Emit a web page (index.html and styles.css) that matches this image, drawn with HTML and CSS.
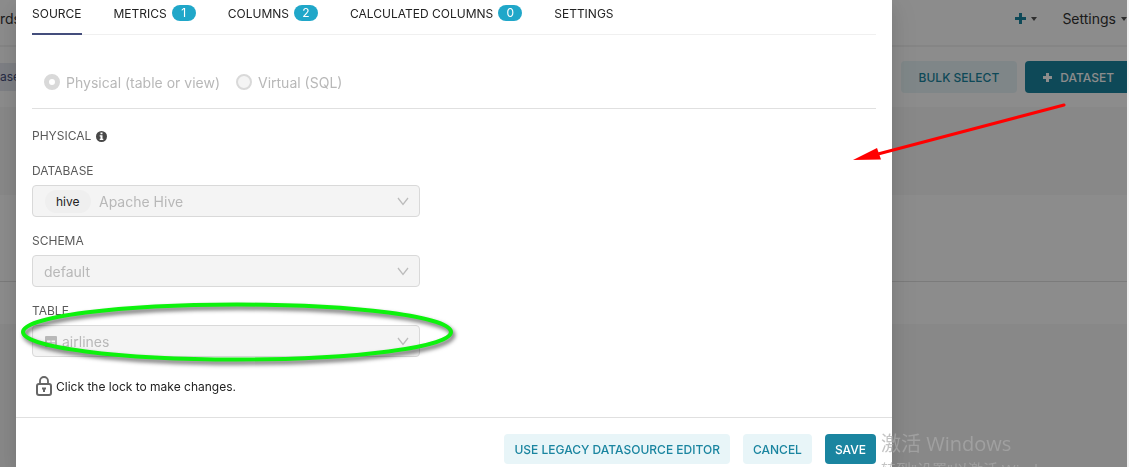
FILE: index.html
```html
<!DOCTYPE html>
<html lang="en">
<head>
<meta charset="utf-8">
<title>Edit Dataset</title>
<link rel="stylesheet" href="styles.css">
</head>
<body>
<div class="page">
  <header class="navbar">
    <a class="nav-link" href="#">rds</a>
    <div class="nav-right">
      <button class="nav-button" type="button" aria-label="New">
        <svg width="11" height="11" viewBox="0 0 11 11"><path d="M4 0h3v4h4v3H7v4H4V7H0V4h4z" fill="#1a85a0"/></svg>
        <span class="caret"></span>
      </button>
      <button class="nav-button settings" type="button">Settings <span class="caret"></span></button>
    </div>
  </header>
  <div class="subbar">
    <a class="subtab" href="#">ase</a>
    <div class="actions">
      <button class="btn btn-large secondary" type="button">BULK SELECT</button>
      <button class="btn btn-large primary add" type="button">
        <svg width="9" height="9" viewBox="0 0 9 9"><path d="M3 0h3v3h3v3H6v3H3V6H0V3h3z" fill="#fff"/></svg>
        DATASET
      </button>
    </div>
  </div>
  <div class="filters"></div>
  <div class="list-head"></div>
  <div class="list-row"></div>
</div>

<div class="overlay">
  <main class="modal">
    <div class="modal-body">
      <nav class="tabs">
        <button class="tab active" type="button">SOURCE</button>
        <button class="tab" type="button">METRICS <span class="badge">1</span></button>
        <button class="tab" type="button">COLUMNS <span class="badge">2</span></button>
        <button class="tab" type="button">CALCULATED COLUMNS <span class="badge">0</span></button>
        <button class="tab" type="button">SETTINGS</button>
      </nav>
      <div class="kinds">
        <label class="kind"><input class="radio" type="radio" name="kind" checked disabled>Physical (table or view)</label>
        <label class="kind"><input class="radio" type="radio" name="kind" disabled>Virtual (SQL)</label>
      </div>
      <h2 class="section">PHYSICAL
        <svg width="11" height="11" viewBox="0 0 11 11"><circle cx="5.500" cy="5.500" r="5.500" fill="#484848"/><path d="M4.500 1.500h2v1.800h-2zM3.700 4.300h2.800v3.500h.8V9H3.700V7.800h.8V5.500h-.8z" fill="#fff"/></svg>
      </h2>
      <div class="field">
        <label class="field-label" for="database">DATABASE</label>
        <div class="select-box">
          <select class="select with-tag" id="database" disabled><option>Apache Hive</option></select>
          <span class="tag">hive</span>
          <svg class="chevron" width="12" height="9" viewBox="0 0 12 9"><path d="M1 1l5 6.500L11 1" fill="none" stroke="#bcbcbc" stroke-width="1.300"/></svg>
        </div>
      </div>
      <div class="field">
        <label class="field-label" for="schema">SCHEMA</label>
        <div class="select-box">
          <select class="select" id="schema" disabled><option>default</option></select>
          <svg class="chevron" width="12" height="9" viewBox="0 0 12 9"><path d="M1 1l5 6.500L11 1" fill="none" stroke="#bcbcbc" stroke-width="1.300"/></svg>
        </div>
      </div>
      <div class="field">
        <label class="field-label" for="table">TABLE</label>
        <div class="select-box">
          <select class="select with-icon" id="table" disabled><option>airlines</option></select>
          <svg class="table-icon" width="12" height="11" viewBox="0 0 12 11"><path d="M0 1q0-1 1-1h10q1 0 1 1v9q0 1-1 1H1q-1 0-1-1z" fill="#b8b8b8"/><path d="M2 4.500h3.500v1.800H2zM6.500 4.500H10v1.800H6.500zM2 7.500h3.500v1.800H2zM6.500 7.500H10v1.800H6.500z" fill="#f4f4f4"/></svg>
          <svg class="chevron" width="12" height="9" viewBox="0 0 12 9"><path d="M1 1l5 6.500L11 1" fill="none" stroke="#bcbcbc" stroke-width="1.300"/></svg>
        </div>
      </div>
      <button class="lock" type="button">
        <svg width="16" height="20" viewBox="0 0 16 20"><rect x="1" y="8" width="14" height="11" rx="2" fill="none" stroke="#666" stroke-width="2"/><path d="M4 8V5a4 4 0 0 1 8 0v3" fill="none" stroke="#666" stroke-width="1.800"/><path d="M6 11.500h4v2H9V16H7v-2.500H6z" fill="#666"/></svg>
        Click the lock to make changes.
      </button>
    </div>
    <footer class="modal-footer">
      <button class="btn secondary" type="button">USE LEGACY DATASOURCE EDITOR</button>
      <button class="btn secondary" type="button">CANCEL</button>
      <button class="btn primary" type="button">SAVE</button>
    </footer>
  </main>
</div>

<div class="watermark">
  <p class="watermark-title">激活 Windows</p>
  <p class="watermark-note">转到"设置"以激活 Windows</p>
</div>

<svg class="marks" width="1129" height="467" viewBox="0 0 1129 467">
  <ellipse class="ring" cx="237" cy="332" rx="214" ry="27.500"/>
  <path d="M1064 105L878 154" stroke="#f00" stroke-width="3" stroke-linecap="round"/>
  <path d="M853 160L877 148L881 159.500z" fill="#f00"/>
</svg>
</body>
</html>
```

FILE: styles.css
```css
* {
  box-sizing: border-box;
}

body {
  margin: 0;
  height: 100vh;
  overflow: hidden;
  background: #f1f1f1;
  color: #333;
  font-family: Inter, "Noto Sans CJK SC", sans-serif;
  font-size: 14px;
}

button {
  border: 0;
  padding: 0;
  background: none;
  color: inherit;
  font: inherit;
  white-space: nowrap;
}

a {
  color: inherit;
  text-decoration: none;
}

svg {
  flex: none;
}

.page {
  display: flex;
  flex-direction: column;
  height: 100%;
  margin-right: 2px;
  overflow: hidden;
  background: #f7f7f7;
}

.navbar {
  display: flex;
  flex: none;
  align-items: center;
  justify-content: space-between;
  height: 47px;
  padding-bottom: 8px;
  border-bottom: 2px solid #f2f2f2;
  background: #fff;
}

.nav-right {
  display: flex;
  gap: 25px;
}

.nav-button {
  display: flex;
  align-items: center;
  gap: 5px;
}

.caret {
  border: 3px solid transparent;
  border-top: 4px solid #555;
  border-bottom: 0;
}

.subbar {
  display: flex;
  flex: none;
  align-items: center;
  justify-content: space-between;
  height: 60px;
  background: #fff;
}

.subtab {
  width: 40px;
  background: #e5e8f0;
  color: #444e7c;
  font-size: 12px;
  line-height: 28px;
}

.actions {
  display: flex;
  gap: 8px;
}

.filters {
  flex: none;
  height: 88px;
}

.list-head {
  flex: none;
  height: 87px;
  border-bottom: 1px solid #e0e0e0;
  background: #fff;
}

.list-row {
  flex: none;
  height: 42px;
  background: #fff;
}

.btn {
  height: 30px;
  padding: 0 10px;
  border-radius: 4px;
  font-size: 12px;
  font-weight: 500;
}

.btn-large {
  height: 32px;
  padding: 0 18px;
}

.secondary {
  background: #e8f5f8;
  color: #1a85a0;
}

.primary {
  background: #1a85a0;
  color: #fff;
}

.add {
  display: flex;
  align-items: center;
  gap: 8px;
  margin-right: -5px;
}

.overlay {
  position: fixed;
  inset: 0 2px 0 0;
  padding: 0 235px 0 16px;
  background: rgba(0, 0, 0, 0.45);
}

.modal {
  display: flex;
  flex-direction: column;
  min-height: 100%;
  background: #fff;
  box-shadow: 0 6px 16px rgba(0, 0, 0, 0.1), 0 9px 28px 8px rgba(0, 0, 0, 0.06);
}

.modal-body {
  display: flex;
  flex: 1;
  flex-direction: column;
  padding: 0 16px;
}

.tabs {
  display: flex;
  gap: 32px;
  height: 35px;
  box-shadow: inset 0 -1px #f0f0f0;
}

.tab {
  display: flex;
  align-items: center;
  gap: 5px;
  padding-bottom: 7px;
  border-bottom: 2px solid transparent;
  color: #222;
  font-size: 12px;
}

.active {
  border-color: #444e7c;
}

.badge {
  min-width: 24px;
  padding: 0 6px;
  border-radius: 8px;
  background: #20a7c9;
  color: #fff;
  line-height: 16px;
}

.kinds {
  display: flex;
  align-items: center;
  gap: 16px;
  height: 74px;
  padding: 21px 12px 0;
  border-bottom: 1px solid #e0e0e0;
}

.kind {
  display: flex;
  align-items: center;
  gap: 6px;
  color: #b8b8b8;
}

.radio {
  width: 16px;
  height: 16px;
  margin: 0;
  appearance: none;
  border: 2px solid #d9d9d9;
  border-radius: 50%;
  background: #f4f4f4;
}

.radio:checked {
  border-width: 5px;
  background: #fff;
}

.section,
.field-label {
  color: #5a5a5a;
  font-size: 12px;
  font-weight: 400;
  line-height: 16px;
}

.section {
  display: flex;
  align-items: center;
  gap: 5px;
  margin: 19px 0;
}

.field {
  display: flex;
  flex-direction: column;
  gap: 6px;
  max-width: 388px;
  margin-bottom: 16px;
}

.select-box {
  display: grid;
  align-items: center;
}

.select-box > * {
  grid-area: 1 / 1;
}

.select {
  width: 100%;
  height: 32px;
  padding: 0 11px;
  appearance: none;
  border: 1px solid #d9d9d9;
  border-radius: 4px;
  background: #f4f4f4;
  color: #b8b8b8;
  font: inherit;
  opacity: 1;
}

.with-tag {
  padding-left: 66px;
}

.with-icon {
  padding-left: 29px;
}

.tag {
  justify-self: start;
  margin-left: 13px;
  padding: 0 11px;
  border-radius: 12px;
  background: #efefef;
  color: #222;
  font-size: 12px;
  line-height: 23px;
}

.chevron {
  justify-self: end;
  margin-right: 11px;
}

.table-icon {
  margin-left: 13px;
}

.lock {
  display: flex;
  align-items: center;
  align-self: flex-start;
  gap: 4px;
  margin: 3px 0 0 4px;
  color: #222;
  font-size: 12px;
}

.modal-footer {
  display: flex;
  justify-content: flex-end;
  gap: 13px;
  height: 50px;
  padding: 16px 16px 0;
  border-top: 1px solid #e0e0e0;
}

.watermark {
  position: fixed;
  top: 429px;
  left: 881px;
  color: rgba(170, 170, 170, 0.7);
  font-family: "Open Sans", "Noto Sans CJK SC", sans-serif;
  white-space: nowrap;
}

.watermark p {
  margin: 0;
}

.watermark-title {
  font-size: 20px;
  line-height: 30px;
}

.watermark-note {
  font-size: 15px;
  line-height: 20px;
}

.marks {
  position: fixed;
  top: 0;
  left: 0;
  pointer-events: none;
}

.ring {
  fill: none;
  stroke: #0df20d;
  stroke-width: 4;
  filter: drop-shadow(2px 3px 2px rgba(0, 0, 0, 0.6));
}
```
